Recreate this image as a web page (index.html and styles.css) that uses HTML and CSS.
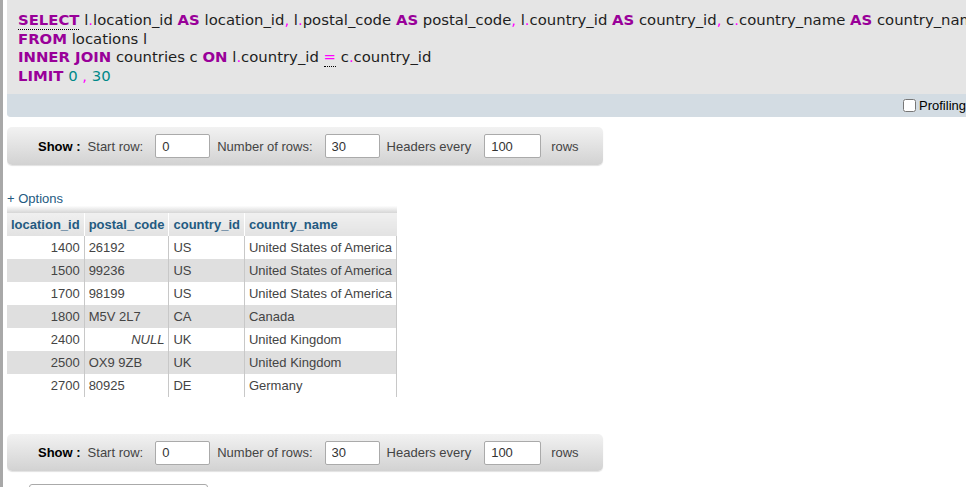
FILE: index.html
```html
<!DOCTYPE html>
<html>
<head>
<meta charset="utf-8">
<link rel="stylesheet" href="styles.css">
</head>
<body>
<div class="page">
  <div class="sidebar-edge"></div>
  <div class="main">
    <div class="sql-box">
      <div class="sql-code">
        <div class="ln"><span class="kw help">SELECT</span> l<span class="pn">.</span>location_id <span class="kw">AS</span> location_id<span class="pn">,</span> l<span class="pn">.</span>postal_code <span class="kw">AS</span> postal_code<span class="pn">,</span> l<span class="pn">.</span>country_id <span class="kw">AS</span> country_id<span class="pn">,</span> c<span class="pn">.</span>country_name <span class="kw">AS</span> country_name</div>
        <div class="ln"><span class="kw">FROM</span> locations l</div>
        <div class="ln"><span class="kw">INNER JOIN</span> countries c <span class="kw">ON</span> l<span class="pn">.</span>country_id <span class="pn help">=</span> c<span class="pn">.</span>country_id</div>
        <div class="ln"><span class="kw">LIMIT</span> <span class="num">0</span> <span class="pn">,</span> <span class="num">30</span></div>
      </div>
      <div class="sql-tools">
        <label class="profiling"><input type="checkbox" class="chk">Profiling</label>
      </div>
    </div>

    <div class="navbar">
      <span class="show">Show :</span>
      <span class="lbl lbl-start">Start row:</span>
      <input class="num-input" type="text" value="0">
      <span class="lbl lbl-num">Number of rows:</span>
      <input class="num-input" type="text" value="30">
      <span class="lbl lbl-num">Headers every</span>
      <input class="num-input num-last" type="text" value="100">
      <span class="lbl lbl-rows">rows</span>
    </div>

    <div class="options">+ Options</div>

    <div class="results">
      <div class="head-strip"></div>
      <table class="data">
        <thead>
          <tr><th>location_id</th><th>postal_code</th><th>country_id</th><th>country_name</th></tr>
        </thead>
        <tbody>
          <tr class="odd"><td class="r">1400</td><td>26192</td><td>US</td><td>United States of America</td></tr>
          <tr class="even"><td class="r">1500</td><td>99236</td><td>US</td><td>United States of America</td></tr>
          <tr class="odd"><td class="r">1700</td><td>98199</td><td>US</td><td>United States of America</td></tr>
          <tr class="even"><td class="r">1800</td><td>M5V 2L7</td><td>CA</td><td>Canada</td></tr>
          <tr class="odd"><td class="r">2400</td><td class="r null">NULL</td><td>UK</td><td>United Kingdom</td></tr>
          <tr class="even"><td class="r">2500</td><td>OX9 9ZB</td><td>UK</td><td>United Kingdom</td></tr>
          <tr class="odd"><td class="r">2700</td><td>80925</td><td>DE</td><td>Germany</td></tr>
        </tbody>
      </table>
    </div>

    <div class="navbar navbar-bottom">
      <span class="show">Show :</span>
      <span class="lbl lbl-start">Start row:</span>
      <input class="num-input" type="text" value="0">
      <span class="lbl lbl-num">Number of rows:</span>
      <input class="num-input" type="text" value="30">
      <span class="lbl lbl-num">Headers every</span>
      <input class="num-input num-last" type="text" value="100">
      <span class="lbl lbl-rows">rows</span>
    </div>

    <div class="ops-box"></div>
  </div>
</div>
</body>
</html>
```

FILE: styles.css
```css
html, body {
  margin: 0;
  padding: 0;
  background: #fff;
  overflow: hidden;
}

body {
  font-family: "Liberation Sans", Arial, sans-serif;
  font-size: 13px;
  color: #444;
}

.page {
  display: flex;
  height: 487px;
  width: 966px;
  overflow: hidden;
}

.sidebar-edge {
  width: 3px;
  background: #a8a8a8;
  flex: none;
}

.main {
  margin-left: 4px;
  width: 959px;
  flex: none;
  overflow: hidden;
}

/* SQL box */
.sql-box {
  background: #e5e5e5;
  border-bottom-left-radius: 4px;
}

.sql-code {
  padding: 11px 0 9px 11px;
  font-family: "DejaVu Sans", Verdana, sans-serif;
  font-size: 14.85px;
  line-height: 18.5px;
  color: #1e1e1e;
  white-space: nowrap;
  overflow: hidden;
}

.kw {
  color: #990099;
  font-weight: bold;
}

.pn {
  color: #ff00ff;
}

.num {
  color: #008888;
}

.help {
  border-bottom: 1px dotted #000;
}

.sql-tools {
  background: #d3dce3;
  height: 23px;
  border-bottom-left-radius: 4px;
  display: flex;
  justify-content: flex-end;
  align-items: center;
}

.profiling {
  display: flex;
  align-items: center;
  color: #000;
  font-size: 13px;
  white-space: nowrap;
}

.chk {
  margin: 0 3px 0 0;
  width: 13px;
  height: 13px;
}

/* Navigation bar */
.navbar {
  margin-top: 10px;
  width: 596px;
  height: 38px;
  box-sizing: border-box;
  border-radius: 5px;
  background: linear-gradient(#f2f2f2, #d2d2d2);
  box-shadow: 0 1px 1px rgba(0,0,0,0.12);
  display: flex;
  align-items: center;
  padding-left: 31px;
  white-space: nowrap;
}

.navbar-bottom {
  margin-top: 37px;
  height: 37px;
}

.show {
  font-weight: bold;
  color: #000;
  margin-right: 7px;
}

.lbl {
  color: #444;
}

.lbl-start, .lbl-num {
  margin-right: 12px;
}

.lbl-rows {
  margin-left: 3px;
}

.num-input {
  width: 55px;
  height: 24px;
  box-sizing: border-box;
  border: 1px solid #aaa;
  border-radius: 2px;
  background: #fff;
  font-family: "Liberation Sans", Arial, sans-serif;
  font-size: 13px;
  color: #333;
  padding: 0 6px;
  margin: 0 7px 0 0;
}

.num-last {
  width: 57px;
  margin-left: 1px;
}

/* Options */
.options {
  margin-top: 26px;
  color: #235a81;
  font-size: 13px;
  line-height: 15px;
}

.results {
  margin-top: 0;
  display: inline-block;
  vertical-align: top;
}

.head-strip {
  height: 7px;
  background: linear-gradient(#fdfdfd, #d6d6d6);
}

.data {
  border-collapse: collapse;
  font-size: 13px;
}

.data th {
  background: linear-gradient(#f0f0f0, #e2e2e2);
  color: #235a81;
  font-weight: bold;
  text-align: left;
  padding: 0 4px;
  height: 23px;
  box-sizing: border-box;
  border-left: 1px solid #fff;
  white-space: nowrap;
}

.data th:first-child {
  border-left: none;
}

.data td {
  padding: 0 4px;
  height: 23px;
  box-sizing: border-box;
  border-left: 1px solid #c8c8c8;
  color: #444;
  white-space: nowrap;
}

.data td:first-child {
  border-left: none;
}

.data td:last-child {
  border-right: 1px solid #c8c8c8;
}

.data tr.odd td {
  background: #fff;
}

.data tr.even td {
  background: #dfdfdf;
}

.data td.r {
  text-align: right;
}

.data td.null {
  font-style: italic;
}

.ops-box {
  margin: 13px 0 0 22px;
  width: 177px;
  height: 20px;
  border: 1px solid #aaa;
  border-radius: 3px;
  background: #fff;
}
```
